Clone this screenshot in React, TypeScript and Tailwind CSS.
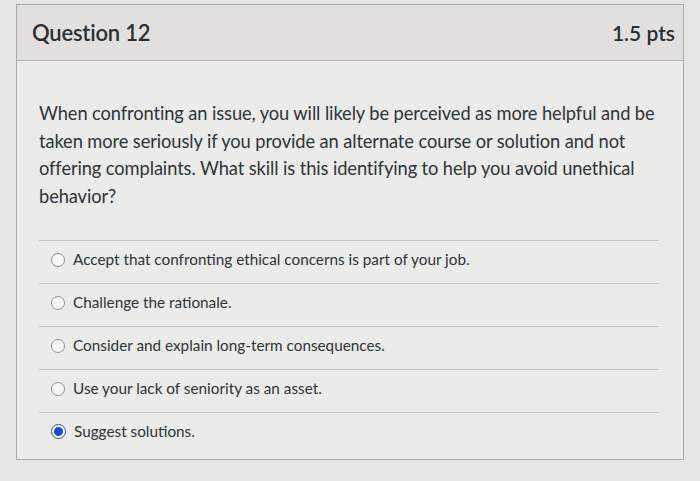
import React from "react";

const options = [
  { text: "Accept that confronting ethical concerns is part of your job.", checked: false },
  { text: "Challenge the rationale.", checked: false },
  { text: "Consider and explain long-term consequences.", checked: false },
  { text: "Use your lack of seniority as an asset.", checked: false },
  { text: "Suggest solutions.", checked: true },
];

function Radio({ checked }: { checked: boolean }) {
  if (checked) {
    return (
      <span className="flex h-[15px] w-[15px] shrink-0 items-center justify-center rounded-full border border-[#2a4f8f] bg-white">
        <span className="h-[9px] w-[9px] rounded-full bg-[#1250d8]" />
      </span>
    );
  }
  return <span className="h-[14px] w-[14px] shrink-0 rounded-full border border-[#8d9296] bg-[#f6f6f5]" />;
}

export default function App() {
  return (
    <div
      className="h-[481px] w-[700px] overflow-hidden bg-[#e6e6e3] pt-[4px] text-[#2d3338]"
      style={{ fontFamily: "Lato, 'Open Sans', sans-serif" }}
    >
      <div className="ml-[16px] h-[456px] w-[668px] border border-[#a9aaa8] bg-[#ebebe9]">
        <div className="flex h-[56px] items-center justify-between border-b border-[#b3b4b2] bg-[#e1e0de] pl-[15px] pr-[8px]">
          <span className="text-[22px] font-semibold tracking-[-0.2px] text-[#2b2f33]">Question 12</span>
          <span className="text-[21px] font-semibold text-[#2b2f33]">1.5 pts</span>
        </div>
        <div className="px-[22px] pt-[39px]">
          <p className="text-[18.3px] leading-[27.5px] tracking-[-0.1px] text-[#2e3438]">
            When confronting an issue, you will likely be perceived as more helpful and be taken more seriously
            if you provide an alternate course or solution and not offering complaints. What skill is this
            identifying to help you avoid unethical behavior?
          </p>
          <div className="mt-[30px] mr-[2px]">
            {options.map((o, i) => (
              <div
                key={i}
                className="flex h-[43px] items-center gap-[8px] border-t border-[#c4c5c3] pb-[5px] pl-[12px]"
              >
                <Radio checked={o.checked} />
                <span className="text-[15.3px] text-[#2e3438]">{o.text}</span>
              </div>
            ))}
          </div>
        </div>
      </div>
    </div>
  );
}
